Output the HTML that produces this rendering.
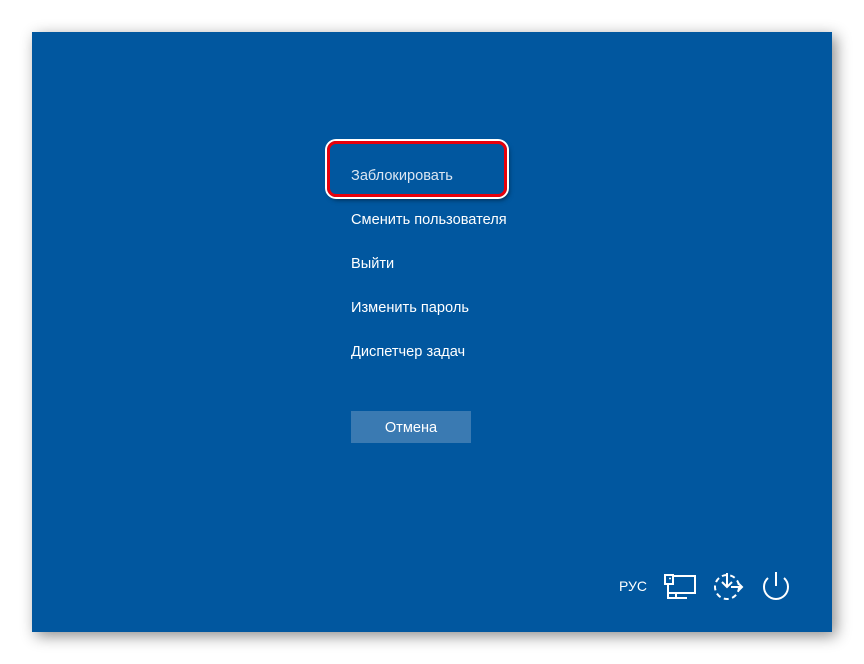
<!DOCTYPE html>
<html><head><meta charset="utf-8"><style>
body{margin:0;width:864px;height:664px;background:#fff;position:relative;overflow:hidden;font-family:"Segoe UI","Liberation Sans",sans-serif}
#p{position:absolute;left:32px;top:32px;width:800px;height:600px;background:#01579f;box-shadow:4px 4px 14px rgba(0,0,0,.45)}
.t{position:absolute;left:351px;color:#fff;font-size:14.6px;line-height:20px}
#box{position:absolute;left:327px;top:141px;width:174px;height:50px;border:3px solid #e8000b;border-radius:9px;box-shadow:0 0 0 2px #fff,2px 3px 5px rgba(0,0,0,.5)}
#btn{position:absolute;left:351px;top:411px;width:120px;height:32px;background:#3a7ab2;color:#fff;font-size:14.6px;line-height:34px;text-align:center}
</style></head><body>
<div id="p"></div>
<div id="box"></div>
<div class="t" style="top:166px;color:#dbe6f2">Заблокировать</div>
<div class="t" style="top:210px">Сменить пользователя</div>
<div class="t" style="top:254px">Выйти</div>
<div class="t" style="top:298px">Изменить пароль</div>
<div class="t" style="top:342px">Диспетчер задач</div>
<div id="btn">Отмена</div>
<div style="position:absolute;left:619px;top:578px;color:#fff;font-size:14px">РУС</div>
<svg style="position:absolute;left:0;top:0" width="864" height="664" fill="none" stroke="#fff" stroke-width="2">
<rect x="665" y="575" width="8" height="9"/>
<path d="M673 576H695V593H668V584M668 584V599M676 593V599M669 598H687"/>
<path d="M669 578.5h2" stroke-width="1.5"/>
<circle cx="727" cy="587" r="12" stroke-dasharray="5 3.5"/>
<path d="M727 573V587M722 582L727 587L732 582M731 587H742M738 583L742 587L738 591"/>
<path d="M776 572V586M768 578A12 12 0 1 0 784 578"/>
</svg>
</body></html>
